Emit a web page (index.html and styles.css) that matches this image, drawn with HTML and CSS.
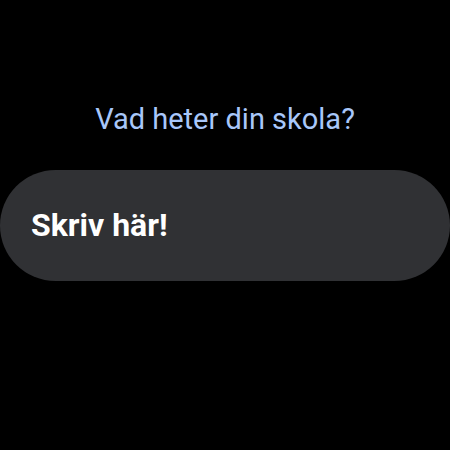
FILE: index.html
```html
<!DOCTYPE html>
<html lang="sv">
<head>
<meta charset="utf-8">
<link rel="stylesheet" href="styles.css">
</head>
<body>
<main class="screen">
  <h1 class="question">Vad heter din skola?</h1>
  <div class="field">
    <span class="placeholder">Skriv här!</span>
  </div>
</main>
</body>
</html>
```
FILE: styles.css
```css
html, body {
  margin: 0;
  padding: 0;
  background: #000;
  width: 450px;
  height: 450px;
  overflow: hidden;
}
.screen {
  display: flex;
  flex-direction: column;
  padding-top: 102px;
  font-family: Roboto, "Liberation Sans", sans-serif;
}
.question {
  margin: 0;
  text-align: center;
  font-size: 29px;
  font-weight: 400;
  line-height: 34px;
  color: #a8c7fa;
}
.field {
  margin-top: 34px;
  height: 111px;
  box-sizing: border-box;
  border-radius: 56px;
  background: #303134;
  display: flex;
  align-items: center;
  padding-left: 31px;
  padding-bottom: 1px;
}
.placeholder {
  color: #fff;
  font-size: 32px;
  font-weight: 700;
  line-height: 36px;
}
```
